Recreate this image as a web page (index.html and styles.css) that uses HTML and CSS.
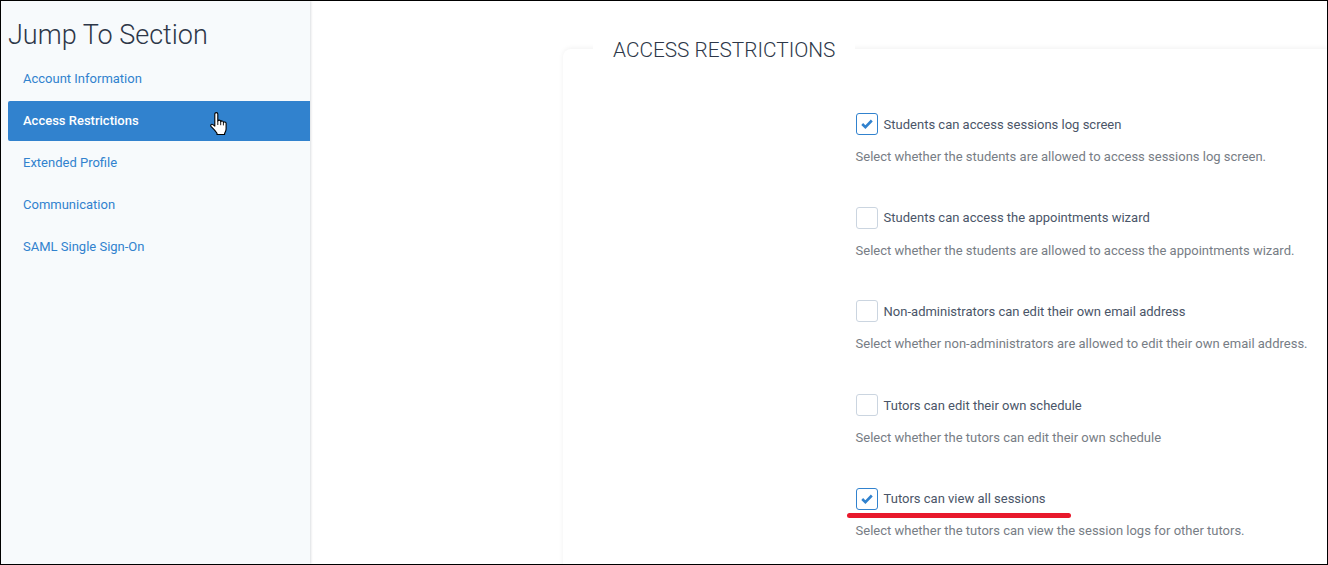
FILE: index.html
```html
<!DOCTYPE html>
<html lang="en">
<head>
<meta charset="utf-8">
<title>Access Restrictions</title>
<link rel="stylesheet" href="styles.css">
</head>
<body>
<div class="frame">
  <aside class="sidebar">
    <h2 class="side-title">Jump To Section</h2>
    <nav class="side-nav">
      <a class="side-link">Account Information</a>
      <a class="side-link active">Access Restrictions</a>
      <a class="side-link">Extended Profile</a>
      <a class="side-link">Communication</a>
      <a class="side-link">SAML Single Sign-On</a>
    </nav>
    <svg class="cursor" width="18" height="24" viewBox="0 0 18 24">
      <path d="M4.800 2c0-1.800 3-1.800 3 0v7.200c.3-1.400 2.700-1.400 2.900 0v.6c.3-1.200 2.500-1.200 2.700.2v.6c.4-1 2.600-.9 2.700.6v5.800c0 2-.8 3.200-1.500 4.400v1.100H7v-1.300C5.500 19 3.200 16.500 1.200 14.600c-1.200-1.300.2-3 1.700-2l1.900 1.500z" fill="#fff" stroke="#000" stroke-width="1.100" stroke-linejoin="round"/>
      <path d="M7.800 9.200v3.800M10.700 9.800v3.400M13.400 10.600v2.800" stroke="#000" stroke-width=".9" fill="none"/>
    </svg>
  </aside>
  <main class="main">
    <section class="card">
      <h3 class="legend">ACCESS RESTRICTIONS</h3>
      <div class="options">
        <div class="option">
          <label class="check-line">
            <span class="box"><svg width="12" height="10" viewBox="0 0 12 10"><path d="M1.200 5l3.200 3.100 6.400-6.600" fill="none" stroke="#3182ce" stroke-width="2.600"/></svg></span>
            Students can access sessions log screen
          </label>
          <p class="hint">Select whether the students are allowed to access sessions log screen.</p>
        </div>
        <div class="option">
          <label class="check-line"><span class="box off"></span>Students can access the appointments wizard</label>
          <p class="hint">Select whether the students are allowed to access the appointments wizard.</p>
        </div>
        <div class="option">
          <label class="check-line"><span class="box off"></span>Non-administrators can edit their own email address</label>
          <p class="hint">Select whether non-administrators are allowed to edit their own email address.</p>
        </div>
        <div class="option">
          <label class="check-line"><span class="box off"></span>Tutors can edit their own schedule</label>
          <p class="hint">Select whether the tutors can edit their own schedule</p>
        </div>
        <div class="option">
          <label class="check-line">
            <span class="box"><svg width="12" height="10" viewBox="0 0 12 10"><path d="M1.200 5l3.200 3.100 6.400-6.600" fill="none" stroke="#3182ce" stroke-width="2.600"/></svg></span>
            Tutors can view all sessions
            <span class="redline"></span>
          </label>
          <p class="hint">Select whether the tutors can view the session logs for other tutors.</p>
        </div>
      </div>
    </section>
  </main>
</div>
</body>
</html>
```
FILE: styles.css
```css
* { box-sizing: border-box; }
html, body { margin: 0; height: 100%; background: #fff; }
body { overflow: hidden; font-family: Roboto, "Liberation Sans", sans-serif; }
.frame {
  display: flex;
  width: 1328px;
  height: 565px;
  border: 1px solid #000;
  overflow: hidden;
}
.sidebar {
  position: relative;
  flex: 0 0 309px;
  padding: 16px 0 0 7px;
  background: #f7fafc;
  box-shadow: 1px 0 2px rgba(45,55,72,.16);
}
.side-title {
  margin: 0 0 6px;
  font-size: 27px;
  line-height: 36px;
  font-weight: 300;
  color: #2d3748;
}
.side-nav { display: flex; flex-direction: column; gap: 2px; }
.side-link {
  display: block;
  height: 40px;
  line-height: 40px;
  padding-left: 15px;
  font-size: 13px;
  color: #3182ce;
  border-radius: 2px 0 0 2px;
}
.side-link.active { background: #3182ce; color: #fff; font-weight: 500; }
.cursor { position: absolute; left: 209px; top: 111px; }
.main { flex: 1; padding: 48px 0 0 253px; min-width: 0; }
.card {
  position: relative;
  height: 530px;
  padding: 64.3px 0 0 292.6px;
  border-radius: 8px 0 0 0;
  box-shadow: 0 -1px 5px rgba(0,0,0,.06);
}
.legend {
  position: absolute;
  left: 30px;
  top: -12px;
  margin: 0;
  padding: 0 20px;
  background: #fff;
  font-size: 20.8px;
  line-height: 26px;
  font-weight: 300;
  color: #2d3748;
}
.options { display: flex; flex-direction: column; }
.option { height: 93.6px; }
.check-line {
  position: relative;
  display: flex;
  align-items: center;
  gap: 6px;
  height: 22px;
  font-size: 13px;
  color: #4a5568;
}
.box {
  display: flex;
  align-items: center;
  justify-content: center;
  flex: 0 0 22px;
  width: 22px;
  height: 22px;
  background: #fff;
  border: 1px solid #3182ce;
  border-radius: 3px;
}
.box.off { border-color: #cbd5e0; }
.hint {
  margin: 13.7px 0 0;
  font-size: 13px;
  line-height: 15px;
  color: #777d85;
  white-space: nowrap;
}
.redline {
  position: absolute;
  left: -8.6px;
  top: 25px;
  width: 224px;
  height: 5px;
  background: #e8192c;
  border-radius: 2.5px;
}
```
